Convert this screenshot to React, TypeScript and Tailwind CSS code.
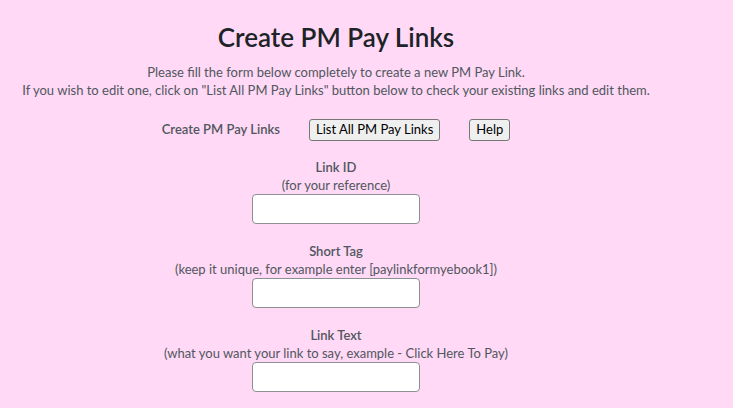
import React from "react";

function Field({ label, hint, top }: { label: string; hint: string; top: string }) {
  return (
    <div className={`flex flex-col items-center ${top}`}>
      <div className="text-[13px] font-semibold leading-[18px] text-[#50575e]">{label}</div>
      <div className="text-[13px] leading-[18px] text-[#50575e]">{hint}</div>
      <input
        type="text"
        className="h-[30px] w-[168px] rounded-[4px] border border-[#8c8f94] bg-white"
      />
    </div>
  );
}

export default function App() {
  return (
    <div className="min-h-[408px] w-full bg-[#ffd9f5] font-['Lato',sans-serif] text-[#3c434a]">
      <div className="flex w-[672px] flex-col items-center pt-[20px] text-center">
        <h1 className="text-[26px] font-semibold leading-[34px] text-[#1d2327]">Create PM Pay Links</h1>
        <p className="mt-[9px] text-[13px] leading-[18px] text-[#50575e]">
          Please fill the form below completely to create a new PM Pay Link.
          <br />
          If you wish to edit one, click on "List All PM Pay Links" button below to check your existing links and edit them.
        </p>
        <div className="mt-[20px] flex items-center">
          <span className="text-[13px] font-semibold text-[#50575e]">Create PM Pay Links</span>
          <button className="ml-[29px] h-[22px] rounded-[3px] border border-[#767676] bg-[#efefef] px-[6px] text-[13px] text-black">
            List All PM Pay Links
          </button>
          <button className="ml-[29px] h-[22px] rounded-[3px] border border-[#767676] bg-[#efefef] px-[6px] text-[13px] text-black">
            Help
          </button>
        </div>
        <Field label="Link ID" hint="(for your reference)" top="mt-[17px]" />
        <Field label="Short Tag" hint="(keep it unique, for example enter [paylinkformyebook1])" top="mt-[18px]" />
        <Field label="Link Text" hint="(what you want your link to say, example - Click Here To Pay)" top="mt-[18px]" />
      </div>
    </div>
  );
}
